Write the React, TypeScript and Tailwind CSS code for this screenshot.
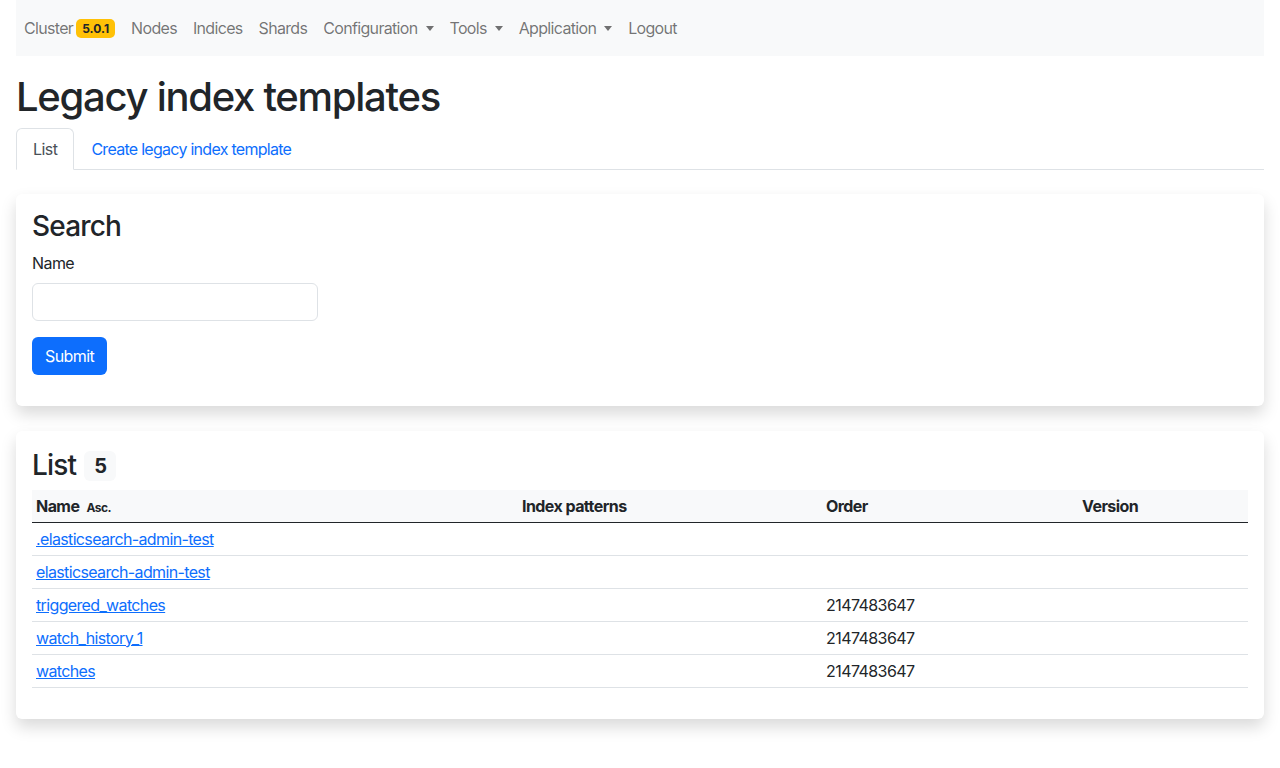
const font = { fontFamily: 'Inter, "Liberation Sans", sans-serif' };

function Caret() {
  return <span className="ml-[8px] inline-block border-x-[4px] border-t-[5px] border-x-transparent border-t-current align-[3px]" />;
}

const rows = [
  { name: ".elasticsearch-admin-test", patterns: "", order: "", version: "" },
  { name: "elasticsearch-admin-test", patterns: "", order: "", version: "" },
  { name: "triggered_watches", patterns: "", order: "2147483647", version: "" },
  { name: "watch_history_1", patterns: "", order: "2147483647", version: "" },
  { name: "watches", patterns: "", order: "2147483647", version: "" },
];

export default function App() {
  return (
    <div className="min-h-screen bg-white px-4 text-base leading-6 tracking-[-0.035em] text-[#212529]" style={font}>
      <nav className="flex h-14 items-center bg-[#f8f9fa] px-0 tracking-[-0.042em] text-[rgba(0,0,0,0.55)]">
        <a className="px-2 flex items-center">
          Cluster
          <span className="ml-[3px] rounded-[5px] bg-[#ffc107] px-[6px] py-[3px] text-[12px] font-bold leading-[13px] tracking-normal text-[#212529]">5.0.1</span>
        </a>
        <a className="px-2">Nodes</a>
        <a className="px-2">Indices</a>
        <a className="px-2">Shards</a>
        <a className="px-2">Configuration<Caret /></a>
        <a className="px-2">Tools<Caret /></a>
        <a className="px-2">Application<Caret /></a>
        <a className="px-2">Logout</a>
      </nav>

      <h1 className="mt-[17px] mb-2 text-[40px] font-medium leading-[47px] tracking-[-0.032em]">Legacy index templates</h1>

      <div className="flex border-b border-[#dee2e6]">
        <a className="-mb-px rounded-t-[6px] border border-[#dee2e6] border-b-white bg-white px-4 py-[7.5px] text-[#495057]">List</a>
        <a className="border border-transparent px-4 py-[7.5px] tracking-[-0.045em] text-[#0d6efd]">Create legacy index template</a>
      </div>

      <div className="mt-6 rounded-[6px] bg-white p-4 pb-[15px] shadow-[0_8px_16px_rgba(0,0,0,0.15)]">
        <h3 className="mb-2 mt-0 text-[28px] font-medium leading-[33px] tracking-[-0.03em]">Search</h3>
        <label className="mb-2 block">Name</label>
        <input className="block h-[38px] w-[286px] rounded-[6px] border border-[#dee2e6] px-3" />
        <button className="mt-4 mb-4 rounded-[6px] bg-[#0d6efd] px-[13px] py-[7px] text-white">Submit</button>
      </div>

      <div className="mt-[25px] rounded-[6px] bg-white px-4 pt-[17px] pb-[31px] shadow-[0_8px_16px_rgba(0,0,0,0.15)]">
        <h3 className="mb-2 flex items-center text-[28px] font-medium leading-[34px] tracking-[-0.03em]">
          List
          <span className="ml-2 mt-[2px] rounded-[6px] bg-[#f8f9fa] px-[10px] text-[20px] font-bold leading-[30px] text-[#212529]">5</span>
        </h3>
        <table className="w-full border-collapse text-left">
          <thead>
            <tr className="border-b border-[#212529] bg-[#f8f9fa]">
              <th className="h-8 w-[486px] px-1 py-0 font-bold">
                Name <span className="ml-[4px] text-[12px] font-bold leading-none">Asc.</span>
              </th>
              <th className="h-8 w-[304px] px-1 py-0 font-bold">Index patterns</th>
              <th className="h-8 w-[256px] px-1 py-0 font-bold">Order</th>
              <th className="h-8 px-1 py-0 font-bold">Version</th>
            </tr>
          </thead>
          <tbody>
            {rows.map((r) => (
              <tr key={r.name} className="border-b border-[#dee2e6]">
                <td className="px-1 py-1">
                  <a className="text-[#0d6efd] underline tracking-[-0.04em]">{r.name}</a>
                </td>
                <td className="px-1 py-1">{r.patterns}</td>
                <td className="px-1 py-1">{r.order}</td>
                <td className="px-1 py-1">{r.version}</td>
              </tr>
            ))}
          </tbody>
        </table>
      </div>
    </div>
  );
}
